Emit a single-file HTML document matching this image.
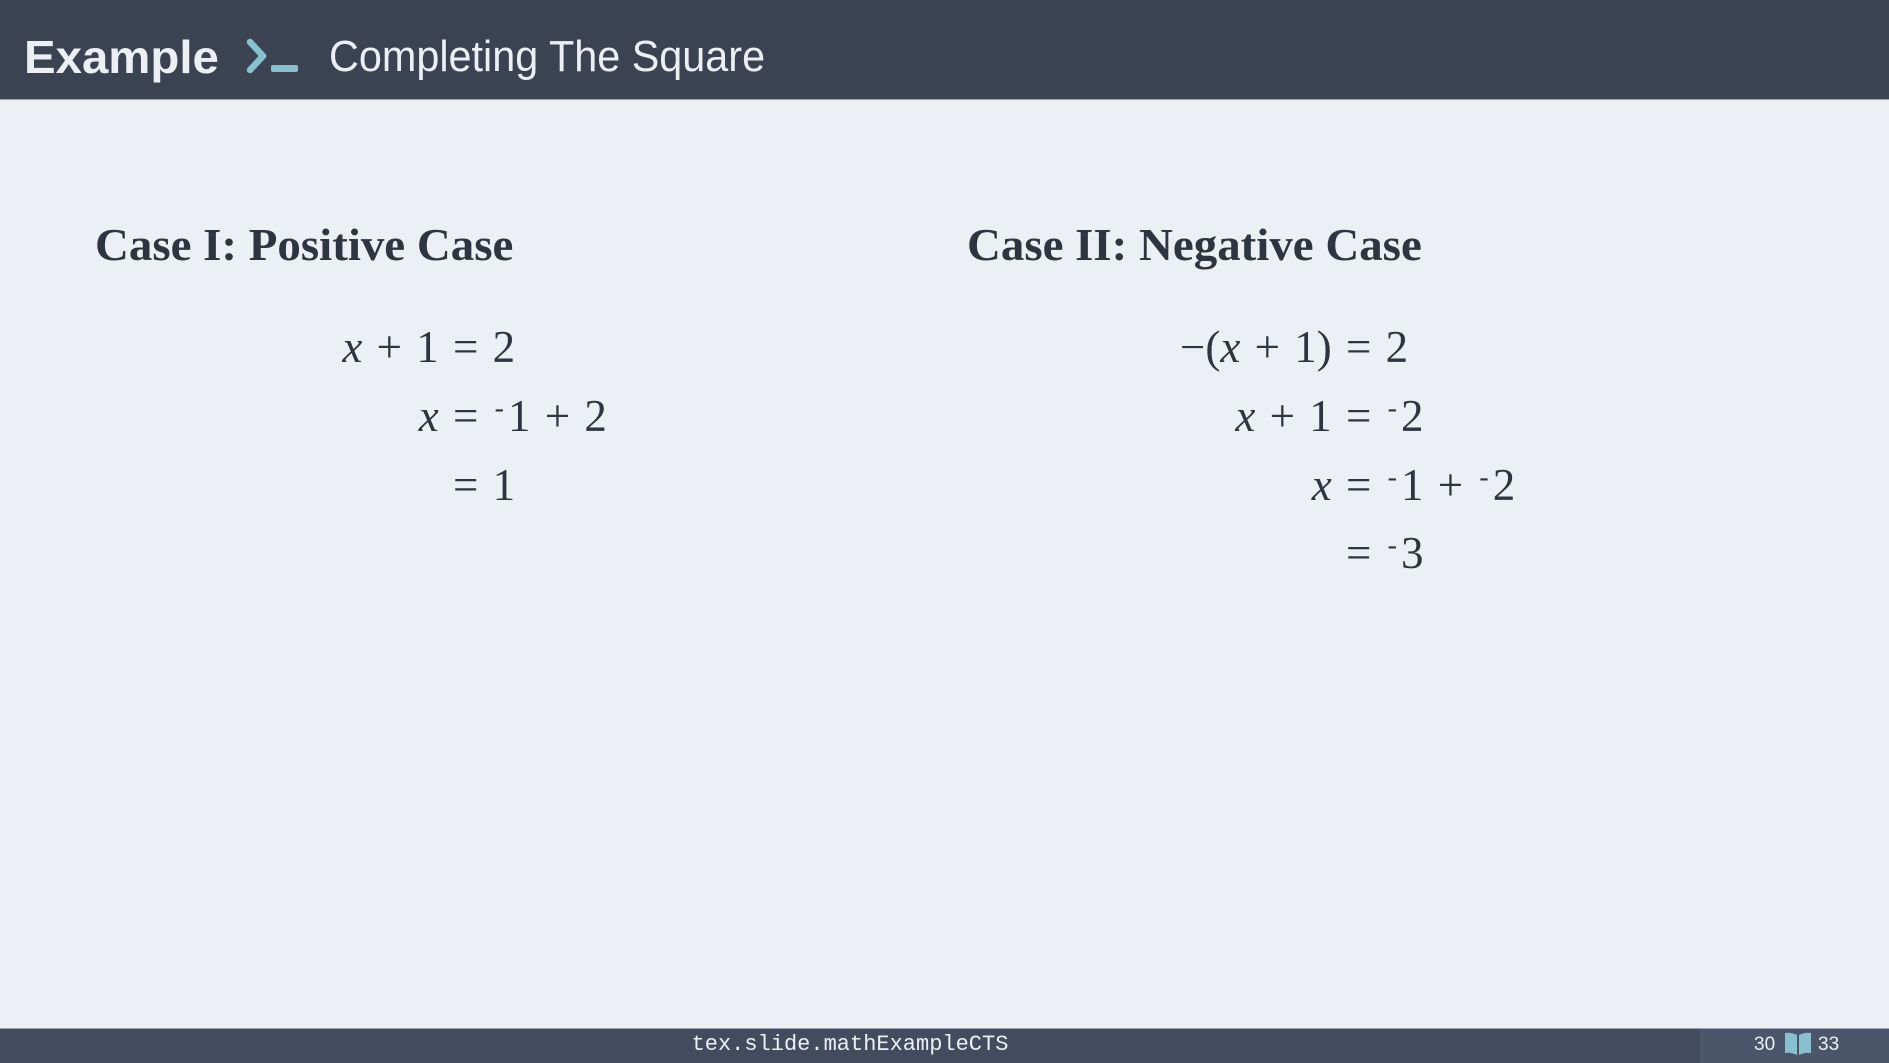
<!DOCTYPE html>
<html><head><meta charset="utf-8"><style>
*{margin:0;padding:0;box-sizing:border-box}
body{width:1889px;height:1063px;background:#eceff4;position:relative;overflow:hidden;color:#2e3440;font-family:"Liberation Serif",serif}
.hdr{position:absolute;left:0;top:0;width:1889px;height:100px;background:#3b4252;border-bottom:1px solid #9aa3b3}
.t{position:absolute;color:#eceff4;font-family:"Liberation Sans",sans-serif;white-space:nowrap;line-height:1}
h2{position:absolute;font-family:"Liberation Serif",serif;font-weight:bold;font-size:46px;white-space:nowrap;line-height:1;transform:scaleX(1.02);transform-origin:left}
.m{position:absolute;font-size:45px;line-height:1;white-space:nowrap;word-spacing:3px}
.l{text-align:right}
i{font-style:italic}
sup{font-size:28px;vertical-align:14px;margin-right:4px;margin-left:2px}
.ftr{position:absolute;left:0;top:1028px;width:1889px;height:35px;background:#434c5e;border-top:1px solid #9aa3b3}
.fr{position:absolute;left:1700px;top:1028px;width:189px;height:35px;background:#4c566a;border-top:1px solid #9aa3b3}
</style></head><body>
<div class="hdr"></div>
<div class="t" style="left:24px;top:34px;font-size:46px;font-weight:bold;transform:scaleX(1.03);transform-origin:left">Example</div>
<svg style="position:absolute;left:245px;top:38px" width="56" height="36"><path d="M5 4 L18 18 L5 32" stroke="#88c0d0" stroke-width="6.5" fill="none" stroke-linecap="round" stroke-linejoin="round"/><rect x="26" y="27" width="27" height="7" rx="2" fill="#88c0d0"/></svg>
<div class="t" style="left:329px;top:35px;font-size:44px;transform:scaleX(0.94);transform-origin:left">Completing The Square</div>

<h2 style="left:95px;top:222px">Case I: Positive Case</h2>
<h2 style="left:967px;top:222px">Case II: Negative Case</h2>

<div class="m l" style="right:1436px;top:325px"><i>x</i> + 1&nbsp;</div><div class="m" style="left:453px;top:325px">= 2</div>
<div class="m l" style="right:1436px;top:394px"><i>x</i>&nbsp;</div><div class="m" style="left:453px;top:394px">= <sup>-</sup>1 + 2</div>
<div class="m" style="left:453px;top:463px">= 1</div>

<div class="m l" style="right:543px;top:325px">−(<i>x</i> + 1)&nbsp;</div><div class="m" style="left:1346px;top:325px">= 2</div>
<div class="m l" style="right:543px;top:394px"><i>x</i> + 1&nbsp;</div><div class="m" style="left:1346px;top:394px">= <sup>-</sup>2</div>
<div class="m l" style="right:543px;top:463px"><i>x</i>&nbsp;</div><div class="m" style="left:1346px;top:463px">= <sup>-</sup>1 + <sup>-</sup>2</div>
<div class="m" style="left:1346px;top:531px">= <sup>-</sup>3</div>

<div class="ftr"></div><div class="fr"></div>
<div style="position:absolute;left:650px;top:1031px;width:400px;text-align:center;color:#eceff4;font-family:'Liberation Mono',monospace;font-size:22px;line-height:28px">tex.slide.mathExampleCTS</div>
<div style="position:absolute;left:1754px;top:1033px;color:#eceff4;font-family:'Liberation Sans',sans-serif;font-size:19px;line-height:24px">30</div>
<svg style="position:absolute;left:1783px;top:1031px" width="30" height="26"><path d="M2 2 Q8 1 14 4 L14 24 Q8 21 2 22 Z M16 4 Q22 1 28 2 L28 22 Q22 21 16 24 Z" fill="#88c0d0"/></svg>
<div style="position:absolute;left:1818px;top:1033px;color:#eceff4;font-family:'Liberation Sans',sans-serif;font-size:19px;line-height:24px">33</div>
</body></html>
